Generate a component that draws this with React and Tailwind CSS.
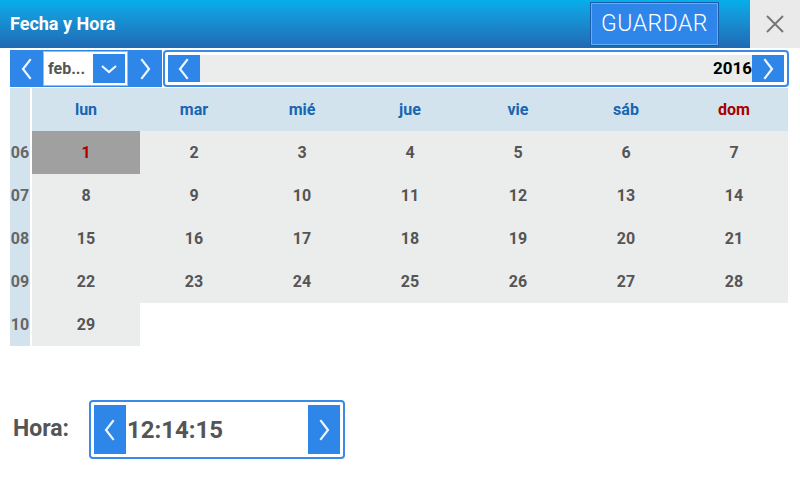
import React from "react";

const BLUE = "bg-[#2e86e8]";

function Chevron({ dir = "left", w = 12, h = 22 }) {
  const pts = dir === "left" ? "9,2 2,11 9,20" : "3,2 10,11 3,20";
  return (
    <svg width={w} height={h} viewBox="0 0 12 22" fill="none">
      <polyline points={pts} stroke="#eef6ff" strokeWidth="2.2" strokeLinecap="square" />
    </svg>
  );
}

function ChevronDown() {
  return (
    <svg width="18" height="10" viewBox="0 0 18 10" fill="none">
      <polyline points="2,2 9,8 16,2" stroke="#eef6ff" strokeWidth="2.2" />
    </svg>
  );
}

const days = ["lun", "mar", "mié", "jue", "vie", "sáb", "dom"];
const weeks = [
  ["06", [1, 2, 3, 4, 5, 6, 7]],
  ["07", [8, 9, 10, 11, 12, 13, 14]],
  ["08", [15, 16, 17, 18, 19, 20, 21]],
  ["09", [22, 23, 24, 25, 26, 27, 28]],
  ["10", [29]],
];

export default function App() {
  return (
    <div
      className="w-[800px] h-[480px] bg-white overflow-hidden"
      style={{ fontFamily: "Roboto, 'Liberation Sans', sans-serif" }}
    >
      {/* header */}
      <div className="flex h-[48px]">
        <div className="flex-1 flex items-center justify-between pl-[10px] pr-[31px] bg-gradient-to-b from-[#05aeea] to-[#1f69b4]">
          <span className="text-white font-bold text-[18px] -mt-[1px]">Fecha y Hora</span>
          <button className="h-[44px] w-[129px] bg-[#2e86ea] border border-[#1b5ca8] outline outline-1 outline-[#5fb2f2] -outline-offset-2 text-white font-light text-[23px] tracking-[0.5px] flex items-center justify-center">
            GUARDAR
          </button>
        </div>
        <div className="w-[50px] bg-[#e9eae9] flex items-center justify-center">
          <svg width="20" height="20" viewBox="0 0 20 20">
            <path d="M2 2 L18 18 M18 2 L2 18" stroke="#777" strokeWidth="2" />
          </svg>
        </div>
      </div>

      {/* month / year */}
      <div className="flex pl-[10px] mt-[2px] h-[37px]">
        <div className={`flex w-[152px] ${BLUE}`}>
          <div className="w-[33px] flex items-center justify-center">
            <Chevron dir="left" />
          </div>
          <div className="w-[85px] my-[1px] bg-white border border-[#8cc0f5] flex items-center pl-[4px] pr-[2px] justify-between">
            <span className="font-bold text-[16px] text-[#555]">feb...</span>
            <div className={`w-[32px] h-[29px] ${BLUE} flex items-center justify-center`}>
              <ChevronDown />
            </div>
          </div>
          <div className="flex-1 flex items-center justify-center">
            <Chevron dir="right" />
          </div>
        </div>
        <div className="ml-[1px] w-[626px] rounded-[4px] border-2 border-[#3a8ae8] bg-white p-[3px]">
          <div className="h-full bg-[#ebecec] flex items-center">
            <div className={`w-[32px] h-full ${BLUE} flex items-center justify-center`}>
              <Chevron dir="left" />
            </div>
            <span className="flex-1 text-right font-bold text-[17px] text-black">2016</span>
            <div className={`w-[32px] h-full ${BLUE} flex items-center justify-center`}>
              <Chevron dir="right" />
            </div>
          </div>
        </div>
      </div>

      {/* calendar */}
      <div className="flex pl-[10px] mt-[1px]">
        <div className="w-[20px] bg-[#d3e3ed] flex flex-col">
          <div className="h-[43px]" />
          {weeks.map(([w]) => (
            <div key={w} className="h-[43px] flex items-center justify-center font-bold text-[16px] text-[#666]">
              {w}
            </div>
          ))}
        </div>
        <div className="ml-[2px] w-[756px]">
          <div className="grid grid-cols-7 h-[43px] bg-[#d3e3ed]">
            {days.map((d) => (
              <div
                key={d}
                className={`flex items-center justify-center font-bold text-[16px] ${d === "dom" ? "text-[#a80000]" : "text-[#1865b2]"}`}
              >
                {d}
              </div>
            ))}
          </div>
          {weeks.map(([w, ds]) => (
            <div key={w} className="grid grid-cols-7 h-[43px]">
              {ds.map((n) => (
                <div
                  key={n}
                  className={`flex items-center justify-center font-bold text-[16px] ${n === 1 ? "bg-[#a0a0a0] text-[#b00000]" : "bg-[#ebecec] text-[#555]"}`}
                >
                  {n}
                </div>
              ))}
            </div>
          ))}
        </div>
      </div>

      {/* hora */}
      <div className="flex items-center mt-[54px] pl-[13px]">
        <span className="font-bold text-[23px] text-[#555] w-[76px]">Hora:</span>
        <div className="w-[256px] h-[59px] rounded-[4px] border-2 border-[#3a8ae8] bg-white p-[3px] flex">
          <div className={`w-[32px] ${BLUE} flex items-center justify-center`}>
            <Chevron dir="left" />
          </div>
          <span className="flex-1 flex items-center pl-[1px] font-bold text-[24px] text-[#555]">12:14:15</span>
          <div className={`w-[32px] ${BLUE} flex items-center justify-center`}>
            <Chevron dir="right" />
          </div>
        </div>
      </div>
    </div>
  );
}
